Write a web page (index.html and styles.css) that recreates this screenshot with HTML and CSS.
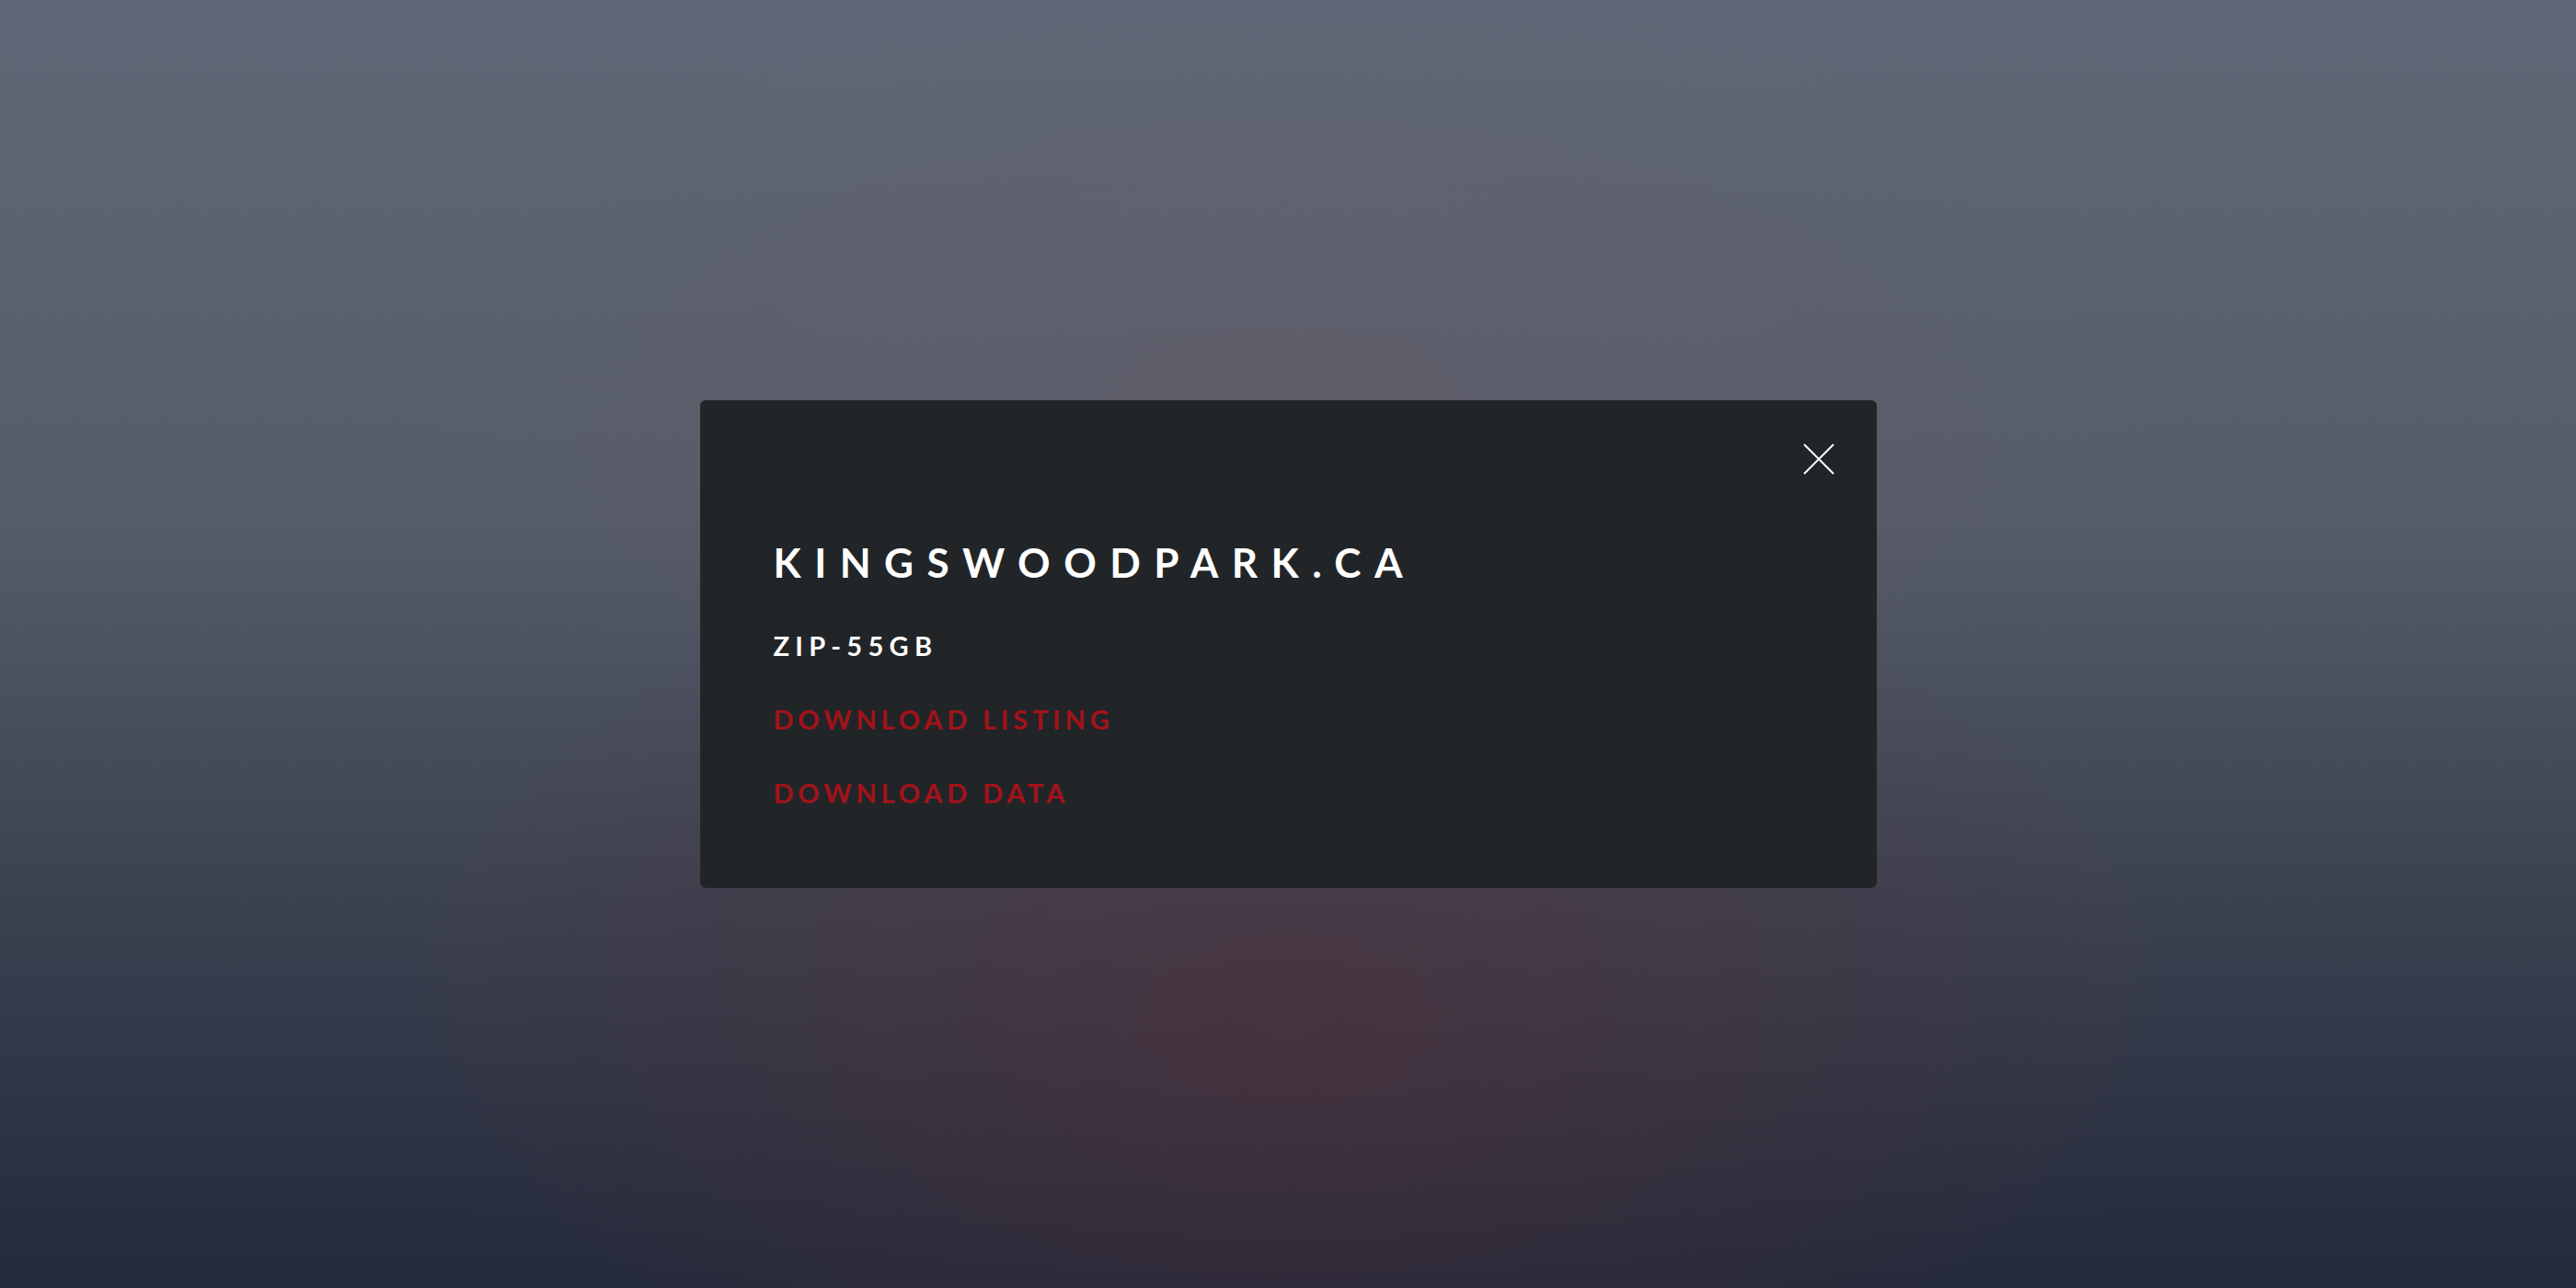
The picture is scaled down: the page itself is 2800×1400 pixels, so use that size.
FILE: index.html
```html
<!DOCTYPE html>
<html lang="en">
<head>
  <meta charset="UTF-8">
  <meta name="viewport" content="width=device-width, initial-scale=1.0">
  <title>Kingswoodpark.ca - Download</title>
  <link rel="stylesheet" href="styles.css">
</head>
<body>
  <div class="modal">
    <div class="modal-top">
      <button class="close" aria-label="Close">
        <svg width="34" height="34" viewBox="0 0 34 34">
          <path d="M1 1 L33 33 M33 1 L1 33" stroke="#ffffff" stroke-width="2" fill="none"/>
        </svg>
      </button>
    </div>
    <div class="modal-body">
      <h1 class="site">KINGSWOODPARK.CA</h1>
      <p class="size">ZIP-55GB</p>
      <a class="dl" href="#">DOWNLOAD LISTING</a>
      <a class="dl" href="#">DOWNLOAD DATA</a>
    </div>
  </div>
</body>
</html>
```

FILE: styles.css
```css
html, body {
  height: 100%;
}
body {
  margin: 0;
  font-family: Lato, 'Open Sans', sans-serif;
  color: #ffffff;
  display: flex;
  align-items: center;
  justify-content: center;
  background:
    radial-gradient(ellipse 1200px 700px at 50% 80%, rgba(92, 44, 50, 0.45), rgba(92, 44, 50, 0) 80%),
    radial-gradient(ellipse 1200px 550px at 50% 30%, rgba(110, 92, 102, 0.3), rgba(110, 92, 102, 0) 80%),
    linear-gradient(to bottom, #5f6776 0%, #565c69 40%, #3c4150 70%, #222a3b 100%);
}
.modal {
  width: 1279px;
  height: 530px;
  box-sizing: border-box;
  background: #222528;
  border-radius: 6px;
  padding: 47px 46px 0 80px;
}
.modal-top {
  display: flex;
  justify-content: flex-end;
}
.close {
  background: none;
  border: 0;
  padding: 0;
  width: 34px;
  height: 34px;
  cursor: pointer;
}
.close svg {
  display: block;
}
.modal-body {
  display: flex;
  flex-direction: column;
  align-items: flex-start;
}
.site {
  margin: 73px 0 0;
  font-size: 44px;
  font-weight: 700;
  line-height: 1;
  letter-spacing: 14.5px;
}
.size {
  margin: 54px 0 0;
  font-size: 29px;
  font-weight: 700;
  line-height: 1;
  letter-spacing: 6.3px;
}
.dl {
  margin-top: 51px;
  font-size: 29px;
  font-weight: 700;
  line-height: 1;
  letter-spacing: 4.8px;
  color: #a3121a;
  text-decoration: none;
}
.dl + .dl {
  margin-top: 51px;
}
```
